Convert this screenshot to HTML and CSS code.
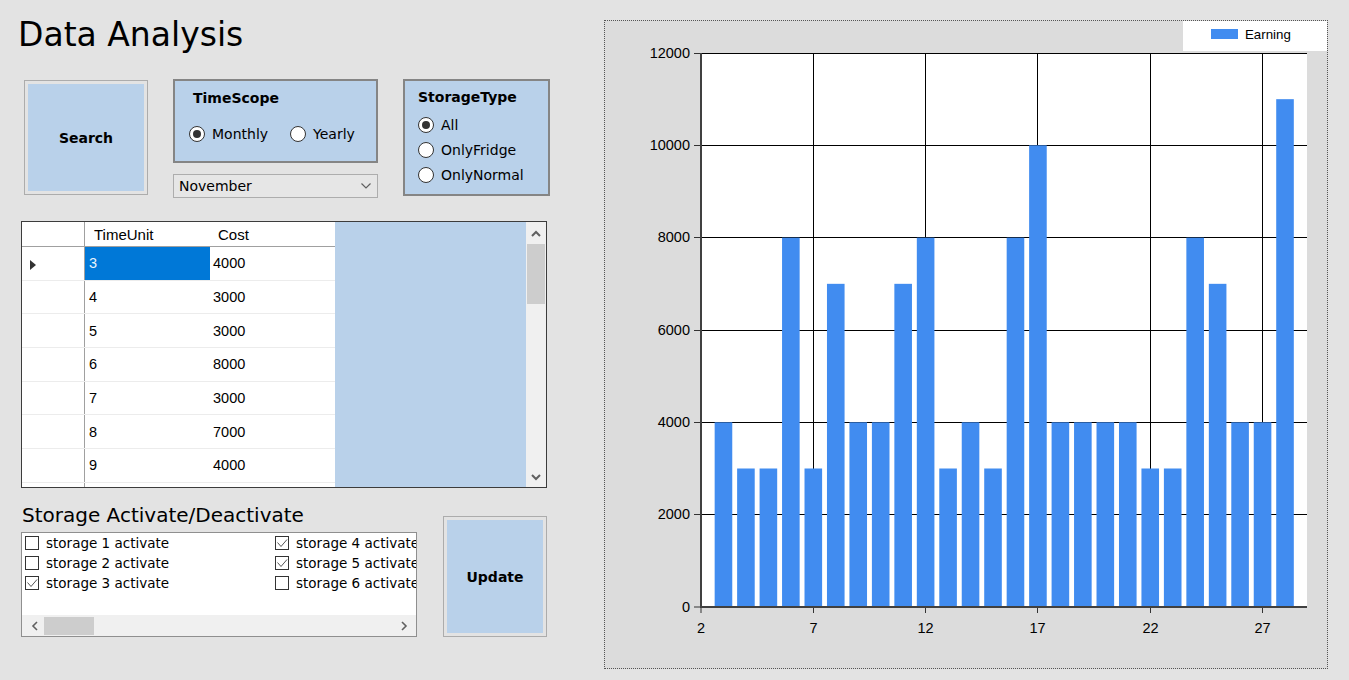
FILE: index.html
```html
<!DOCTYPE html>
<html lang="ko">
<head>
  <meta charset="UTF-8" />
  <title>Data Analysis</title>
  <link rel="stylesheet" href="styles.css">
</head>
<body>
  <div class="form">
    <div class="left">
      <h1>Data Analysis</h1>

      <div class="controls">
        <button class="btn search">Search</button>

        <div class="scope-col">
          <div class="group timescope">
            <div class="group-title">TimeScope</div>
            <div class="radio-row">
              <label class="radio checked"><span class="dot"></span>Monthly</label>
              <label class="radio"><span class="dot"></span>Yearly</label>
            </div>
          </div>
          <div class="combo">
            <span>November</span>
            <svg width="10" height="6" viewBox="0 0 10 6"><polyline points="0.5,0.5 5,5 9.5,0.5" fill="none" stroke="#606060" stroke-width="1.2"/></svg>
          </div>
        </div>

        <div class="group storagetype">
          <div class="group-title">StorageType</div>
          <label class="radio checked"><span class="dot"></span>All</label>
          <label class="radio"><span class="dot"></span>OnlyFridge</label>
          <label class="radio"><span class="dot"></span>OnlyNormal</label>
        </div>
      </div>

      <div class="grid">
        <div class="grid-table">
          <div class="grid-head">
            <div class="rh"></div>
            <div class="col">TimeUnit</div>
            <div class="col">Cost</div>
          </div>
          <div id="grid-body"></div>
        </div>
        <div class="vscroll">
          <svg width="10" height="7" viewBox="0 0 10 7"><polyline points="1,6 5,2 9,6" fill="none" stroke="#606060" stroke-width="2"/></svg>
          <div class="vthumb"></div>
          <div class="vspace"></div>
          <svg width="10" height="7" viewBox="0 0 10 7"><polyline points="1,1 5,5 9,1" fill="none" stroke="#606060" stroke-width="2"/></svg>
        </div>
      </div>

      <div class="bottom">
        <div class="storage">
          <div class="storage-title">Storage Activate/Deactivate</div>
          <div class="checklist">
            <div class="items">
              <div class="item"><span class="box"></span>storage 1 activate</div>
              <div class="item"><span class="box"></span>storage 2 activate</div>
              <div class="item"><span class="box"><svg width="12" height="12" viewBox="0 0 12 12"><polyline points="1.5,5.5 5,9.5 11,2.5" fill="none" stroke="#555" stroke-width="1"/></svg></span>storage 3 activate</div>
              <div class="item"><span class="box"><svg width="12" height="12" viewBox="0 0 12 12"><polyline points="1.5,5.5 5,9.5 11,2.5" fill="none" stroke="#555" stroke-width="1"/></svg></span>storage 4 activate</div>
              <div class="item"><span class="box"><svg width="12" height="12" viewBox="0 0 12 12"><polyline points="1.5,5.5 5,9.5 11,2.5" fill="none" stroke="#555" stroke-width="1"/></svg></span>storage 5 activate</div>
              <div class="item"><span class="box"></span>storage 6 activate</div>
            </div>
            <div class="hscroll">
              <svg width="7" height="10" viewBox="0 0 7 10"><polyline points="6,1 2,5 6,9" fill="none" stroke="#606060" stroke-width="1.6"/></svg>
              <div class="hthumb"></div>
              <div class="hspace"></div>
              <svg width="7" height="10" viewBox="0 0 7 10"><polyline points="1,1 5,5 1,9" fill="none" stroke="#606060" stroke-width="1.6"/></svg>
            </div>
          </div>
        </div>
        <button class="btn update">Update</button>
      </div>
    </div>

    <div class="chart-panel">
      <svg class="chart" width="722" height="647" viewBox="605 21 722 647">
        <rect class="legend" x="1183" y="21" width="144" height="30"/>
        <rect class="swatch" x="1211" y="29" width="27" height="10"/>
        <text class="legend-text" x="1245" y="39">Earning</text>

        <rect class="plot" x="701" y="53" width="606" height="554"/>
        <g class="gridlines">
          <line x1="701" y1="53.5" x2="1307" y2="53.5"/>
          <line x1="701" y1="145.5" x2="1307" y2="145.5"/>
          <line x1="701" y1="237.5" x2="1307" y2="237.5"/>
          <line x1="701" y1="330.5" x2="1307" y2="330.5"/>
          <line x1="701" y1="422.5" x2="1307" y2="422.5"/>
          <line x1="701" y1="514.5" x2="1307" y2="514.5"/>
          <line x1="813.5" y1="53" x2="813.5" y2="607"/>
          <line x1="925.5" y1="53" x2="925.5" y2="607"/>
          <line x1="1037.5" y1="53" x2="1037.5" y2="607"/>
          <line x1="1150.5" y1="53" x2="1150.5" y2="607"/>
          <line x1="1262.5" y1="53" x2="1262.5" y2="607"/>
        </g>
        <g id="bars" class="bars"></g>
        <g class="ticks">
          <line x1="694" y1="53.5" x2="701" y2="53.5"/>
          <line x1="694" y1="145.5" x2="701" y2="145.5"/>
          <line x1="694" y1="237.5" x2="701" y2="237.5"/>
          <line x1="694" y1="330.5" x2="701" y2="330.5"/>
          <line x1="694" y1="422.5" x2="701" y2="422.5"/>
          <line x1="694" y1="514.5" x2="701" y2="514.5"/>
          <line x1="694" y1="607" x2="701" y2="607"/>
          <line x1="701" y1="607" x2="701" y2="613"/>
          <line x1="813.5" y1="607" x2="813.5" y2="613"/>
          <line x1="925.5" y1="607" x2="925.5" y2="613"/>
          <line x1="1037.5" y1="607" x2="1037.5" y2="613"/>
          <line x1="1150.5" y1="607" x2="1150.5" y2="613"/>
          <line x1="1262.5" y1="607" x2="1262.5" y2="613"/>
        </g>
        <g class="axis">
          <line x1="701" y1="53" x2="701" y2="608"/>
          <line x1="700" y1="607" x2="1307" y2="607"/>
        </g>
        <g class="ylabels">
          <text x="690" y="57.5">12000</text>
          <text x="690" y="149.5">10000</text>
          <text x="690" y="242">8000</text>
          <text x="690" y="334.5">6000</text>
          <text x="690" y="427">4000</text>
          <text x="690" y="519">2000</text>
          <text x="690" y="611.5">0</text>
        </g>
        <g class="xlabels">
          <text x="701" y="632.5">2</text>
          <text x="813.5" y="632.5">7</text>
          <text x="925.5" y="632.5">12</text>
          <text x="1037.5" y="632.5">17</text>
          <text x="1150.5" y="632.5">22</text>
          <text x="1262.5" y="632.5">27</text>
        </g>
      </svg>
    </div>
  </div>

  <script>
    // TimeUnit / Cost
    const dados = [
      [3, 4000], [4, 3000], [5, 3000], [6, 8000], [7, 3000], [8, 7000], [9, 4000],
      [10, 4000], [11, 7000], [12, 8000], [13, 3000], [14, 4000], [15, 3000],
      [16, 8000], [17, 10000], [18, 4000], [19, 4000], [20, 4000], [21, 4000],
      [22, 3000], [23, 3000], [24, 8000], [25, 7000], [26, 4000], [27, 4000], [28, 11000]
    ];

    // only 7 rows fit; the 8th shows just its top edge
    const gridBody = document.getElementById('grid-body');
    dados.slice(0, 8).forEach((item, i) => {
      const row = document.createElement('div');
      row.className = 'grid-row';
      const visivel = i < 7;
      row.innerHTML = `
        <div class="rh">${i === 0 ? '<span class="arrow"></span>' : ''}</div>
        <div class="cell${i === 0 ? ' selected' : ''}">${visivel ? item[0] : ''}</div>
        <div class="cell">${visivel ? item[1] : ''}</div>
      `;
      gridBody.appendChild(row);
    });

    // bars: x axis 2..29 over 701..1307, y axis 0..12000 over 607..53
    const bars = document.getElementById('bars');
    dados.forEach(item => {
      const h = item[1] * 554 / 12000;
      const rect = document.createElementNS('http://www.w3.org/2000/svg', 'rect');
      rect.setAttribute('x', (701 + (item[0] - 2) * 22.462 - 8.8).toFixed(2));
      rect.setAttribute('y', (607 - h).toFixed(2));
      rect.setAttribute('width', '17.6');
      rect.setAttribute('height', h.toFixed(2));
      bars.appendChild(rect);
    });
  </script>
</body>
</html>
```

FILE: styles.css
```css
body {
  margin: 0;
  background: #e3e3e3;
  font-family: "DejaVu Sans", sans-serif;
  font-size: 14px;
  color: #000;
}
.form {
  display: flex;
  width: 1349px;
  height: 680px;
  overflow: hidden;
}
.left {
  width: 604px;
  flex-shrink: 0;
}
h1 {
  margin: 0;
  padding: 16px 0 0 18px;
  font-size: 33px;
  line-height: 38px;
  font-weight: normal;
}

/* top controls */
.controls {
  display: flex;
  align-items: flex-start;
  gap: 25px;
  margin-top: 25px;
  padding-left: 24px;
}
.btn {
  font-family: "DejaVu Sans", sans-serif;
  font-size: 14px;
  font-weight: bold;
  color: #000;
  border: 1px solid #acacac;
  padding: 3px;
  background: #b9d1ea;
  background-clip: content-box;
  box-sizing: border-box;
}
.search {
  width: 124px;
  height: 115px;
  margin-top: 1px;
}
.scope-col {
  width: 205px;
}
.group {
  background: #b9d1ea;
  border: 2px solid #858585;
  box-sizing: border-box;
}
.group-title {
  font-weight: bold;
  line-height: 18px;
}
.timescope {
  height: 84px;
  padding: 8px 0 0 14px;
}
.timescope .group-title {
  margin-left: 4px;
}
.radio-row {
  display: flex;
  gap: 22px;
  margin-top: 18px;
}
.radio {
  display: flex;
  align-items: center;
  gap: 7px;
  height: 18px;
}
.dot {
  width: 16px;
  height: 16px;
  border: 1px solid #333;
  border-radius: 50%;
  background: #fff;
  box-sizing: border-box;
  display: flex;
  align-items: center;
  justify-content: center;
}
.radio.checked .dot::after {
  content: "";
  width: 8px;
  height: 8px;
  border-radius: 50%;
  background: #333;
}
.combo {
  margin-top: 11px;
  height: 24px;
  border: 1px solid #adadad;
  background: #e6e6e6;
  box-sizing: border-box;
  display: flex;
  align-items: center;
  justify-content: space-between;
  padding: 0 6px 0 5px;
}
.storagetype {
  width: 147px;
  height: 117px;
  padding: 7px 0 0 13px;
}
.storagetype .group-title {
  margin-bottom: 10px;
}
.storagetype .radio {
  margin-bottom: 7px;
}

/* data grid */
.grid {
  display: flex;
  margin: 23px 0 0 21px;
  width: 526px;
  height: 267px;
  border: 1px solid #3c3c3c;
  box-sizing: border-box;
  background: #b9d1ea;
}
.grid-table {
  width: 504px;
  overflow: hidden;
  font-family: "Liberation Sans", sans-serif;
  font-size: 14.5px;
}
.grid-head,
.grid-row {
  display: flex;
  width: 313px;
  background: #fff;
  box-sizing: border-box;
}
.grid-head {
  height: 25px;
  border-bottom: 1px solid #a0a0a0;
  font-size: 15px;
}
.grid-row {
  height: 33.67px;
  border-bottom: 1px solid #ececec;
}
.rh {
  width: 63px;
  border-right: 1px solid #a0a0a0;
  box-sizing: border-box;
  display: flex;
  align-items: center;
  padding-left: 8px;
}
.col,
.cell {
  width: 125px;
  box-sizing: border-box;
  display: flex;
  align-items: center;
}
.col {
  padding-left: 9px;
}
.col + .col {
  padding-left: 8px;
}
.cell {
  padding-left: 4px;
}
.cell + .cell {
  padding-left: 3px;
}
.grid-head .col:first-of-type,
.grid-row .cell:first-of-type {
  border-right: 1px solid #e4e4e4;
}
.cell.selected {
  background: #0078d7;
  color: #eaf3fc;
}
.arrow {
  width: 0;
  height: 0;
  margin-top: 4px;
  border-top: 5px solid transparent;
  border-bottom: 5px solid transparent;
  border-left: 6px solid #333;
}
.vscroll {
  width: 20px;
  background: #f0f0f0;
  display: flex;
  flex-direction: column;
  align-items: center;
  padding-top: 8px;
  padding-bottom: 6px;
  box-sizing: border-box;
}
.vthumb {
  width: 18px;
  height: 60px;
  margin-top: 7px;
  background: #cdcdcd;
}
.vspace {
  flex: 1;
}

/* storage list */
.bottom {
  display: flex;
  margin-top: 15px;
  padding-left: 21px;
}
.storage {
  width: 396px;
}
.storage-title {
  font-size: 20px;
  line-height: 24px;
  margin-left: 1px;
}
.checklist {
  margin-top: 5px;
  height: 105px;
  border: 1px solid #8f8f8f;
  background: #fff;
  box-sizing: border-box;
  display: flex;
  flex-direction: column;
  overflow: hidden;
}
.items {
  flex: 1;
  display: grid;
  grid-template-columns: 250px 250px;
  grid-template-rows: repeat(3, 20px);
  grid-auto-flow: column;
  font-size: 13.5px;
  white-space: nowrap;
}
.item {
  display: flex;
  align-items: center;
  gap: 7px;
  padding-left: 3px;
}
.box {
  width: 14px;
  height: 14px;
  flex-shrink: 0;
  border: 1px solid #333;
  background: #fff;
  box-sizing: border-box;
  display: flex;
  align-items: center;
  justify-content: center;
}
.hscroll {
  height: 21px;
  background: #f0f0f0;
  display: flex;
  align-items: center;
  padding: 0 8px 0 9px;
}
.hthumb {
  width: 50px;
  height: 18px;
  margin-left: 6px;
  background: #cdcdcd;
}
.hspace {
  flex: 1;
}
.update {
  align-self: flex-end;
  width: 104px;
  height: 121px;
  margin-left: 26px;
}

/* chart */
.chart-panel {
  margin-top: 20px;
  width: 724px;
  height: 649px;
  border: 1px dotted #555;
  background: #dcdcdc;
  box-sizing: border-box;
}
.chart {
  display: block;
}
.legend,
.plot {
  fill: #fff;
}
.swatch,
.bars rect {
  fill: #418cf0;
}
.legend-text {
  font-family: "Liberation Sans", sans-serif;
  font-size: 13.3px;
  fill: #000;
}
.gridlines line {
  stroke: #000;
  stroke-width: 1;
}
.ticks line {
  stroke: #333;
  stroke-width: 1;
}
.axis line {
  stroke: #404040;
  stroke-width: 2;
}
.ylabels text,
.xlabels text {
  font-family: "Liberation Sans", sans-serif;
  font-size: 14.5px;
  fill: #000;
}
.ylabels text {
  text-anchor: end;
}
.xlabels text {
  text-anchor: middle;
}
```
